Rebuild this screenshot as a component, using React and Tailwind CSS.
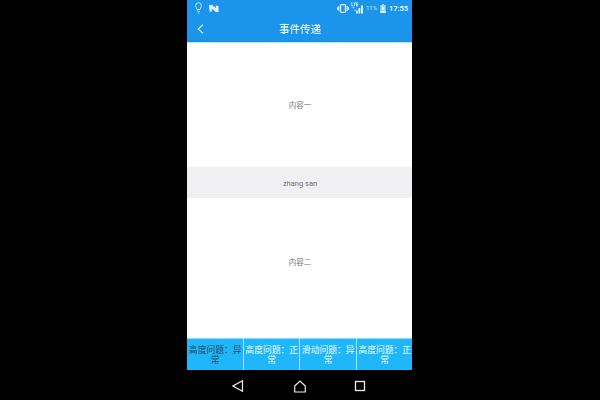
import React from "react";

const tabs = [
  { label: "高度问题：异常", active: true },
  { label: "高度问题：正常" },
  { label: "滑动问题：异常" },
  { label: "高度问题：正常" },
];

function StatusBar() {
  return (
    <div className="flex h-[15px] shrink-0 items-center pr-1 pl-2 text-white">
      <svg width="7" height="12" viewBox="0 0 7 12" fill="none" stroke="#c4eaff" strokeWidth="1" className="mt-px">
        <path d="M2 7.500C1.500 6 .7 5.200 .7 3.500a2.800 2.800 0 0 1 5.600 0C6.300 5.200 5.500 6 5 7.500ZM2.200 9.300h2.600M2.800 11h1.400" />
      </svg>
      <svg width="10" height="7" viewBox="0 0 10 7" fill="#e6f7ff" className="mt-px ml-[7px]">
        <path d="M0 0H3.200L6.800 3.200V.6L9.500 1v6H7L2.700 3.700V6.400L.6 6.700Z" />
      </svg>
      <div className="flex-1" />
      <svg width="12" height="9" viewBox="0 0 12 9" fill="none" stroke="#e6f8ff" className="mt-px">
        <rect x="3.500" y=".7" width="5" height="7.600" rx=".8" strokeWidth="1.300" />
        <path d="M1.800 2v5M.5 3.200v2.600M10.200 2v5M11.500 3.200v2.600" />
      </svg>
      <svg width="14" height="12" viewBox="0 0 14 12" fill="#e6f8ff" className="mr-px ml-[2px]">
        <path d="M.4.5h.8v3h1.300v.7H.4ZM2.600.5h2.200v.7h-.7v3h-.8v-3h-.7ZM5.200.5h2v.7h-1.200v1h1v.7h-1v.6h1.200v.7h-2Z" />
        <path d="M1.200 5h2.400L2.400 6.800ZM3 8.800 4 7 5 8.800Z" opacity=".7" />
        <path d="M5 8.500H6.700v3H5ZM7.500 6H9.300v5.500H7.500ZM10 3.500h2v8h-2Z" />
      </svg>
      <span className="w-[13px] pt-px text-[6px] leading-none whitespace-nowrap text-[#c4eaff]">11%</span>
      <svg width="6" height="9" viewBox="0 0 6 9" className="mt-px ml-px">
        <path d="M2 0h2v1h1.700v8H.3V1H2Z" fill="#9fd8fb" />
        <path d="M.3 7.500h5.400V9H.3ZM3.400 2 1.500 5h1.300l-.4 2 2.100-3H3.200Z" fill="#fff" />
      </svg>
      <span className="ml-[3px] w-[19px] pt-[2px] text-[7.500px] leading-none font-medium whitespace-nowrap">17:55</span>
    </div>
  );
}

export default function App() {
  return (
    <div className="flex h-[400px] w-[600px] justify-center overflow-hidden bg-black pr-px font-['Roboto','Noto_Sans_CJK_SC',sans-serif]">
      <div className="flex w-[225px] flex-col">
        <header className="flex h-[42px] shrink-0 flex-col bg-[#1b95eb]">
          <StatusBar />
          <div className="grid h-[27px] grid-cols-[25px_1fr_24px] items-center border-b border-[#168bdf] pt-[2px] text-white">
            <svg width="7" height="10" viewBox="0 0 7 10" fill="none" stroke="#e3f6ff" strokeWidth="1.100" className="ml-[10px]">
              <path d="M6 .7 1.200 5 6 9.300" />
            </svg>
            <h1 className="pt-[3px] text-center text-[10.500px] leading-none">事件传递</h1>
          </div>
        </header>
        <main className="flex flex-1 flex-col bg-white text-[7.500px] leading-none text-[#777]">
          <section className="flex h-[125px] items-center justify-center border-t border-[#bdeeff] pt-[2px] pl-px">内容一</section>
          <div className="flex h-[31px] items-center justify-center bg-[#f0eff1] pt-[3px] pl-px text-[#707070]">zhang san</div>
          <section className="flex flex-1 items-center justify-center pb-[11px] pl-px">内容二</section>
        </main>
        <div className="grid h-[32px] shrink-0 grid-cols-4 gap-px border-t border-[#8bdcff] bg-[#a5e5ff]">
          {tabs.map((tab, i) => (
            <button
              key={i}
              className={`bg-[#20b7fa] pt-px pl-px text-center text-[8.800px] leading-[10px] break-all ${tab.active ? "text-[#214c62]" : "text-[#e8f9ff]"}`}
            >
              {tab.label}
            </button>
          ))}
        </div>
        <nav className="flex h-[30px] shrink-0 items-center justify-between bg-black pt-[2px] pr-[46px] pl-[45px]">
          <svg width="12" height="12" viewBox="0 0 12 12" fill="none" stroke="#eee" strokeWidth="1.200">
            <path d="M10.500.8v10.400L1 6Z" />
          </svg>
          <svg width="12" height="13" viewBox="0 0 12 13" fill="none" stroke="#eee" strokeWidth="1.200" className="ml-px">
            <path d="M.7 6 6 1l5.300 5v6H.7Z" />
          </svg>
          <svg width="12" height="12" viewBox="0 0 12 12" fill="none" stroke="#eee" strokeWidth="1.300">
            <rect x="1.500" y="1.500" width="9" height="9" />
          </svg>
        </nav>
      </div>
    </div>
  );
}
